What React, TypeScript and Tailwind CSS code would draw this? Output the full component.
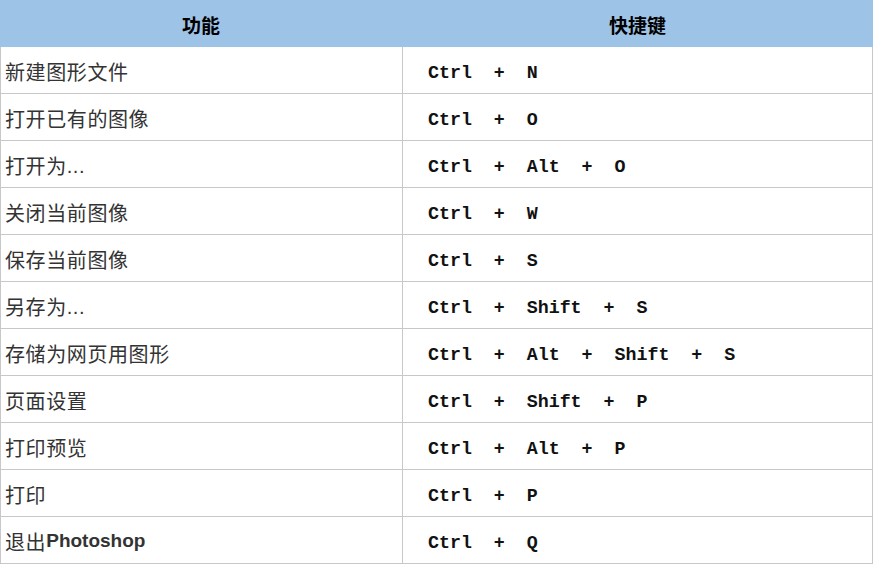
const rows: [string, string][] = [
  ["新建图形文件", "Ctrl  +  N"],
  ["打开已有的图像", "Ctrl  +  O"],
  ["打开为...", "Ctrl  +  Alt  +  O"],
  ["关闭当前图像", "Ctrl  +  W"],
  ["保存当前图像", "Ctrl  +  S"],
  ["另存为...", "Ctrl  +  Shift  +  S"],
  ["存储为网页用图形", "Ctrl  +  Alt  +  Shift  +  S"],
  ["页面设置", "Ctrl  +  Shift  +  P"],
  ["打印预览", "Ctrl  +  Alt  +  P"],
  ["打印", "Ctrl  +  P"],
  ["退出Photoshop", "Ctrl  +  Q"],
];

const cjk = "font-['Noto_Sans_CJK_SC','Liberation_Sans',sans-serif]";
const latin = "font-['Liberation_Sans',sans-serif]";

function Name({ text }: { text: string }) {
  if (text.startsWith("退出")) {
    return (
      <>
        退出<span className={`${latin} font-bold tracking-normal text-[19px]`}>Photoshop</span>
      </>
    );
  }
  if (text.endsWith("...")) {
    return (
      <>
        {text.slice(0, -3)}
        <span className={`${latin} tracking-[0.5px]`}>...</span>
      </>
    );
  }
  return <>{text}</>;
}

export default function App() {
  return (
    <div className="w-[873px] h-[565px] bg-white">
      <div className={`grid grid-cols-[402px_1fr] h-[47px] pt-[4px] bg-[#9dc3e6] text-[19px] font-bold text-black ${cjk}`}>
        <div className="flex items-center justify-center">功能</div>
        <div className="flex items-center justify-center">快捷键</div>
      </div>
      {rows.map(([name, keys]) => (
        <div
          key={name}
          className="grid grid-cols-[402px_1fr] h-[47px] border-b border-l border-r border-[#c8c8c8]"
        >
          <div
            className={`flex items-center pl-[4px] pt-[3px] border-r border-[#c8c8c8] text-[20px] text-[#333] tracking-[0.6px] ${cjk}`}
          >
            <Name text={name} />
          </div>
          <div className="flex items-center pl-[25px] pt-[8px] whitespace-pre font-['Liberation_Mono',monospace] font-bold text-[18.3px] text-[#111]">
            {keys}
          </div>
        </div>
      ))}
    </div>
  );
}
